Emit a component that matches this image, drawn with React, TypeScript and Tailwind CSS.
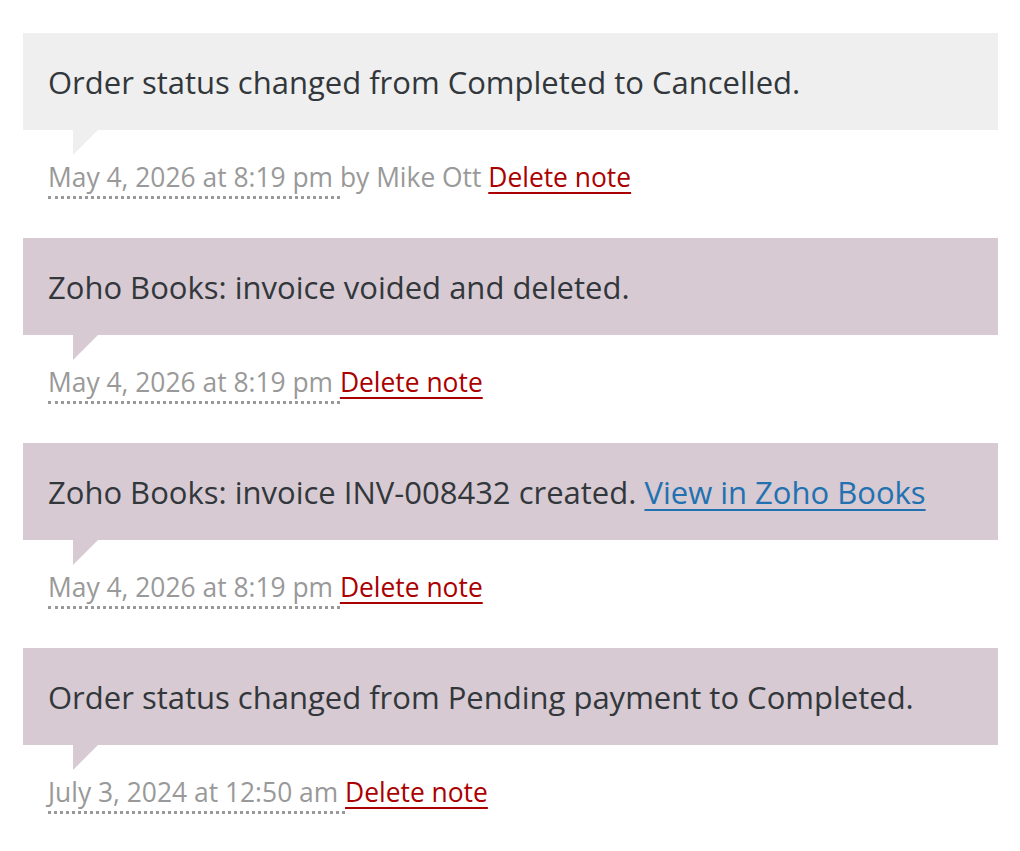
import type { ReactNode } from "react";

type Note = {
  id: number;
  system: boolean;
  content: ReactNode;
  date: string;
  author?: string;
};

const notes: Note[] = [
  {
    id: 1,
    system: false,
    content: "Order status changed from Completed to Cancelled.",
    date: "May 4, 2026 at 8:19 pm",
    author: "Mike Ott",
  },
  {
    id: 2,
    system: true,
    content: "Zoho Books: invoice voided and deleted.",
    date: "May 4, 2026 at 8:19 pm",
  },
  {
    id: 3,
    system: true,
    content: (
      <>
        Zoho Books: invoice INV-008432 created.{" "}
        <a href="#" className="text-[#2271b1] underline decoration-[2px] underline-offset-[5px]">
          View in Zoho Books
        </a>
      </>
    ),
    date: "May 4, 2026 at 8:19 pm",
  },
  {
    id: 4,
    system: true,
    content: "Order status changed from Pending payment to Completed.",
    date: "July 3, 2024 at 12:50 am",
  },
];

function NoteItem({ note }: { note: Note }) {
  const bg = note.system ? "bg-[#d7cad2]" : "bg-[#efefef]";
  const arrow = note.system ? "border-t-[#d7cad2]" : "border-t-[#efefef]";
  return (
    <li className="mb-[17px]">
      <div className={`relative px-[25px] pt-[25px] pb-[23px] ${bg}`}>
        <p className="text-[31px] leading-[49px] text-[#32373c]">{note.content}</p>
        {/* speech-bubble tail */}
        <span
          className={`absolute left-[50px] top-full h-0 w-0 border-solid border-t-[25px] border-r-[25px] border-r-transparent ${arrow}`}
        />
      </div>
      <p className="px-[25px] pt-[27px] pb-[23px] text-[26.4px] leading-[41px] text-[#999]">
        <span className="border-b-[3px] border-dotted border-[#999] pb-[1px]">{note.date} </span>
        {note.author && <>by {note.author} </>}
        <a href="#" className="text-[#a00] underline decoration-[2px] underline-offset-[5px]">
          Delete note
        </a>
      </p>
    </li>
  );
}

export default function App() {
  return (
    <div className="min-h-screen bg-white font-['Open_Sans',sans-serif]">
      <ul className="pl-[23px] pr-[22px] pt-[33px]">
        {notes.map((n) => (
          <NoteItem key={n.id} note={n} />
        ))}
      </ul>
    </div>
  );
}
